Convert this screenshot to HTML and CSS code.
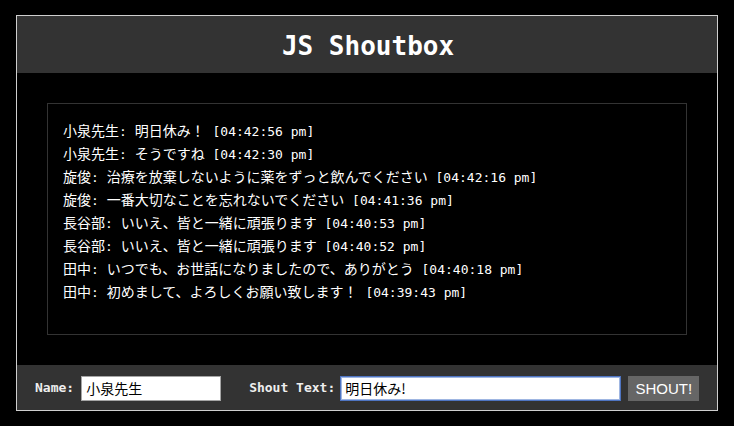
FILE: index.html
```html
<!DOCTYPE html>
<html lang="ja">
<head>
<meta charset="utf-8">
<title>JS Shoutbox</title>
<link rel="stylesheet" href="styles.css">
</head>
<body>
<div class="shoutbox">
  <header class="sb-header"><h1 class="sb-title">JS Shoutbox</h1></header>
  <main class="sb-body">
    <ul class="shouts">
      <li class="shout"><span class="jp">小泉先生</span>: <span class="jp">明日休み！</span> <span class="time">[04:42:56 pm]</span></li>
      <li class="shout"><span class="jp">小泉先生</span>: <span class="jp">そうですね</span> <span class="time">[04:42:30 pm]</span></li>
      <li class="shout"><span class="jp">旋俊</span>: <span class="jp">治療を放棄しないように薬をずっと飲んでください</span> <span class="time">[04:42:16 pm]</span></li>
      <li class="shout"><span class="jp">旋俊</span>: <span class="jp">一番大切なことを忘れないでください</span> <span class="time">[04:41:36 pm]</span></li>
      <li class="shout"><span class="jp">長谷部</span>: <span class="jp">いいえ、皆と一緒に頑張ります</span> <span class="time">[04:40:53 pm]</span></li>
      <li class="shout"><span class="jp">長谷部</span>: <span class="jp">いいえ、皆と一緒に頑張ります</span> <span class="time">[04:40:52 pm]</span></li>
      <li class="shout"><span class="jp">田中</span>: <span class="jp">いつでも、お世話になりましたので、ありがとう</span> <span class="time">[04:40:18 pm]</span></li>
      <li class="shout"><span class="jp">田中</span>: <span class="jp">初めまして、よろしくお願い致します！</span> <span class="time">[04:39:43 pm]</span></li>
    </ul>
  </main>
  <footer class="sb-footer">
    <label class="sb-label" for="name">Name:</label>
    <input class="sb-input sb-name" id="name" type="text" value="小泉先生">
    <label class="sb-label sb-label-shout" for="shout">Shout Text:</label>
    <input class="sb-input sb-shout is-focused" id="shout" type="text" value="明日休み!">
    <button class="sb-button" type="button">SHOUT!</button>
  </footer>
</div>
</body>
</html>
```
FILE: styles.css
```css
html, body {
  margin: 0;
  padding: 0;
  background: #000;
}
body {
  padding: 15px 0 0 16px;
  font-family: "DejaVu Sans Mono", "Noto Sans CJK JP", monospace;
  color: #fff;
}
.shoutbox {
  width: 700px;
  border: 1px solid #cfcfcf;
  background: #000;
}
.sb-header {
  height: 57px;
  background: #333;
  display: flex;
  align-items: center;
  justify-content: center;
}
.sb-title {
  margin: 0;
  font-size: 26px;
  font-weight: bold;
  color: #fff;
  position: relative;
  top: 1px;
  left: 1px;
}
.sb-body {
  padding: 30px 30px 30px 30px;
}
.shouts {
  list-style: none;
  margin: 0;
  height: 200px;
  padding: 15px 15px 15px 15px;
  border: 1px solid #333;
}
.shout {
  font-size: 13px;
  line-height: 23px;
  height: 23px;
  white-space: nowrap;
}
.jp {
  font-family: "Noto Sans CJK JP", sans-serif;
  font-size: 14px;
}
.sb-footer {
  height: 45px;
  background: #333;
  display: flex;
  align-items: center;
  padding-left: 18px;
}
.sb-label {
  font-size: 13px;
  font-weight: bold;
  color: #eee;
  margin-right: 7px;
}
.sb-label-shout {
  margin-left: 28px;
  margin-right: 5px;
}
.sb-input {
  box-sizing: border-box;
  height: 25px;
  margin: 1px 0 0 0;
  padding: 0 4px;
  border: 1px solid #a5a5a5;
  background: #fff;
  color: #000;
  font-family: "Noto Sans CJK JP", sans-serif;
  font-size: 14px;
  outline: none;
}
.sb-name {
  width: 140px;
}
.sb-shout {
  width: 281px;
}
.sb-shout.is-focused {
  border: 1px solid #4f75c2;
  box-shadow: inset 0 0 0 1px #9fb6e2;
}
.sb-button {
  box-sizing: border-box;
  margin: 1px 0 0 7px;
  width: 71px;
  height: 25px;
  border: none;
  padding: 0;
  background: #666;
  color: #fff;
  font-family: "Liberation Sans", Arial, sans-serif;
  font-size: 15px;
}
```
